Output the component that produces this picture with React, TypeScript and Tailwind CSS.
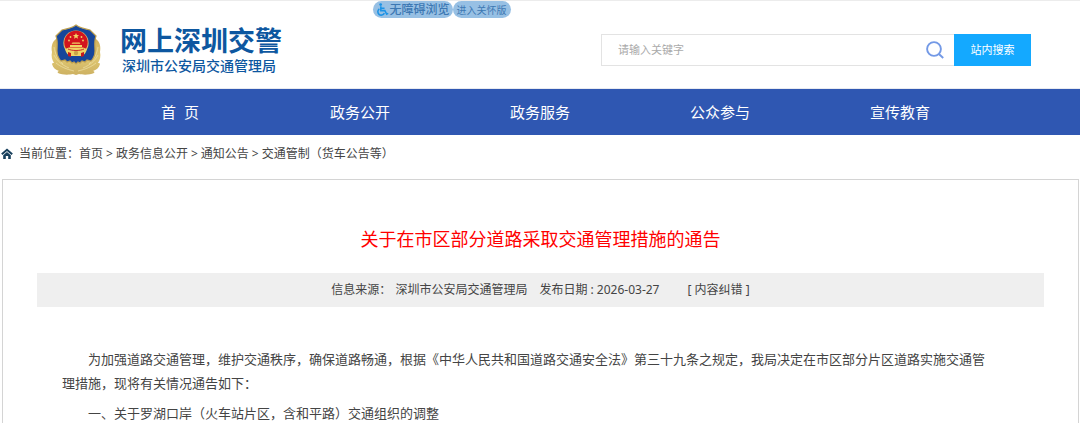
const navItems = ["首\u00a0\u00a0页", "政务公开", "政务服务", "公众参与", "宣传教育"];
const crumbs = ["首页", "政务信息公开", "通知公告", "交通管制（货车公告等）"];

function Emblem() {
  return (
    <svg viewBox="0 0 50 52" className="h-[52px] w-[50px] shrink-0" role="img" aria-label="警徽">
      <defs>
        <linearGradient id="gold" x1="0" y1="0" x2="0" y2="1">
          <stop offset="0" stopColor="#cfae58" />
          <stop offset="0.55" stopColor="#e0c872" />
          <stop offset="1" stopColor="#cdb162" />
        </linearGradient>
      </defs>
      <path
        d="M5 15C1 18 0 23 1 28c-1 4 0 8 2 11-1 0-2 0-2 1 1 4 4 6 7 7-1 0-2 1-1 2 4 2 11 2 15 1l3 1 3-1c4 1 11 1 15-1 1-1 0-2-1-2 3-1 6-3 7-7 0-1-1-1-2-1 2-3 3-7 2-11 1-5 0-10-4-13L25 11z"
        fill="url(#gold)"
      />
      <g stroke="#ecdda0" strokeWidth="0.800" fill="none">
        <path d="M3 23c1 7 4 12 9 17M3 31c3 6 8 10 15 13M5 39c5 4 10 6 18 8" />
        <path d="M47 23c-1 7-4 12-9 17M47 31c-3 6-8 10-15 13M45 39c-5 4-10 6-18 8" />
      </g>
      <path
        d="M25 1c4 3 9 4 14 5l6 6c-2 5-1 10-1 15 0 4-2 8-4 10l-4-1-2 2-3-1-2 2-2-1-2 2-2-2-2 1-2-2-3 1-2-2-4 1c-2-2-4-6-4-10 0-5 1-10-1-15l6-6c5-1 10-2 14-5z"
        fill="#17469a"
        stroke="#bd9f50"
        strokeWidth="1.2"
      />
      <circle cx="25" cy="19" r="12.600" fill="#dcc06a" />
      <circle cx="25" cy="18.500" r="11.700" fill="#d3141d" />
      <path d="M25 9l.9 2 2.200.2-1.700 1.400.6 2.200-2-1.200-2 1.200.6-2.200-1.700-1.400 2.200-.2z" fill="#f0d465" />
      <g fill="#f0d465">
        <circle cx="19.500" cy="13" r="0.900" />
        <circle cx="30.500" cy="13" r="0.900" />
        <circle cx="18" cy="16.500" r="0.900" />
        <circle cx="32" cy="16.500" r="0.900" />
        <path d="M21.500 18.500h7l1 1.300h-9zM19 21h12v2H19z" />
        <path d="M14 25l4-1.500h14l4 1.500c-1 4-3 6-5 7H19c-2-1-4-3-5-7z" />
      </g>
      <path d="M17 25c4 2 12 2 16 0" stroke="#c41a1f" strokeWidth="0.900" fill="none" />
      <circle cx="25" cy="29" r="2.200" fill="#c9a548" />
      <path d="M17 28l3 1v4l-3-1zM33 28l-3 1v4l3-1z" fill="#c41a1f" />
    </svg>
  );
}

function WheelchairIcon() {
  return (
    <svg viewBox="0 0 14 14" className="size-[13px]" fill="none" stroke="#1c93e6" strokeWidth="1.700" aria-hidden="true">
      <circle cx="5" cy="1.700" r="1.500" fill="#1c93e6" stroke="none" />
      <path d="M5.200 3.500v4.700h4.300l2 3.800 1.700-.8M5.200 5.700h4" />
      <path d="M3.600 6.300a3.700 3.700 0 1 0 5.400 4.700" />
    </svg>
  );
}

function HomeIcon() {
  return (
    <svg viewBox="0 0 12 12" className="mr-1.5 ml-px size-3" aria-hidden="true">
      <path d="M.8 6.300L6 1.800l5.200 4.500" fill="none" stroke="#173f5c" strokeWidth="2" />
      <path d="M2.200 7.300L6 4l3.800 3.300V11H7.200V8H4.800v3H2.200z" fill="#173f5c" />
    </svg>
  );
}

export default function App() {
  return (
    <div className="min-h-screen bg-white font-['Noto_Sans','Noto_Sans_CJK_SC',sans-serif] text-[#444]">
      <header className="border-t border-b border-t-[#ececec] border-b-[#e8eaf0]">
        <div className="flex h-[17px] pl-[34.5%] text-[#3d78b3]">
          <a href="#accessible" className="flex w-20 items-center justify-center gap-px rounded-full bg-[#97c0e4] text-[12px] leading-4 font-medium whitespace-nowrap">
            <WheelchairIcon />
            无障碍浏览
          </a>
          <a href="#care" className="flex w-[58px] items-center justify-center rounded-full bg-[#97c0e4] text-[10px] leading-4 whitespace-nowrap">
            进入关怀版
          </a>
        </div>
        <div className="flex items-start justify-between pt-1.5 pr-[49px] pb-3 pl-[51px]">
          <a href="#home" className="flex items-center gap-[19px] font-['Liberation_Sans','Noto_Sans_CJK_SC',sans-serif] text-[#0d57a0]">
            <Emblem />
            <span className="flex flex-col whitespace-nowrap">
              <span className="text-[27px] leading-8 font-bold">网上深圳交警</span>
              <span className="pl-0.5 text-[14px] leading-4 font-medium">深圳市公安局交通管理局</span>
            </span>
          </a>
          <form className="mt-2.5 flex h-8 w-[430px]" onSubmit={(e) => e.preventDefault()}>
            <div className="flex min-w-0 flex-1 items-center border border-r-0 border-[#e3e3e3] pr-2.5 pl-4">
              <input
                type="text"
                aria-label="搜索关键字"
                placeholder="请输入关键字"
                className="min-w-0 flex-1 text-[11px] outline-none placeholder:text-[#aaa]"
              />
              <svg viewBox="0 0 18 18" className="size-[18px]" fill="none" stroke="#7399e6" strokeWidth="1.900" aria-hidden="true">
                <circle cx="8" cy="8" r="6.900" />
                <path d="M12.900 13l4.300 4" />
              </svg>
            </div>
            <button type="submit" className="w-[77px] bg-[#14a9ff] text-[11px] text-white">
              站内搜索
            </button>
          </form>
        </div>
      </header>

      <nav aria-label="主导航" className="bg-[#2f57b2]">
        <ul className="mx-auto grid w-5/6 grid-cols-5">
          {navItems.map((item) => (
            <li key={item}>
              <a href="#nav" className="block text-center text-[15px] leading-[46px] text-white">
                {item}
              </a>
            </li>
          ))}
        </ul>
      </nav>

      <nav aria-label="当前位置" className="flex h-[37px] items-center text-[12px] whitespace-nowrap">
        <HomeIcon />
        <span>当前位置：</span>
        {crumbs.map((crumb, i) => (
          <span key={crumb}>
            {i > 0 && <span className="mx-[3px]">&gt;</span>}
            <a href="#crumb">{crumb}</a>
          </span>
        ))}
      </nav>

      <main className="mr-px ml-0.5 mt-[7px] border border-[#d4d4d4] px-[34px] pt-[43px] pb-1">
        <h1 className="text-center text-[18px] leading-8 text-[#f00]">关于在市区部分道路采取交通管理措施的通告</h1>
        <div className="mt-[18px] flex h-[34px] items-center justify-center bg-[#efefef] text-[12px] whitespace-nowrap">
          <span className="mr-1">信息来源：</span>
          <span className="mr-3">深圳市公安局交通管理局</span>
          <span className="mr-7">发布日期 : 2026-03-27</span>
          <a href="#correct">[ 内容纠错 ]</a>
        </div>
        <article className="mt-10 pr-14 pl-[25px] text-[13px] leading-6">
          <p className="indent-[2em]">
            为加强道路交通管理，维护交通秩序，确保道路畅通，根据《中华人民共和国道路交通安全法》第三十九条之规定，我局决定在市区部分片区道路实施交通管理措施，现将有关情况通告如下：
          </p>
          <p className="mt-1.5 indent-[2em]">一、关于罗湖口岸（火车站片区，含和平路）交通组织的调整</p>
        </article>
      </main>
    </div>
  );
}
